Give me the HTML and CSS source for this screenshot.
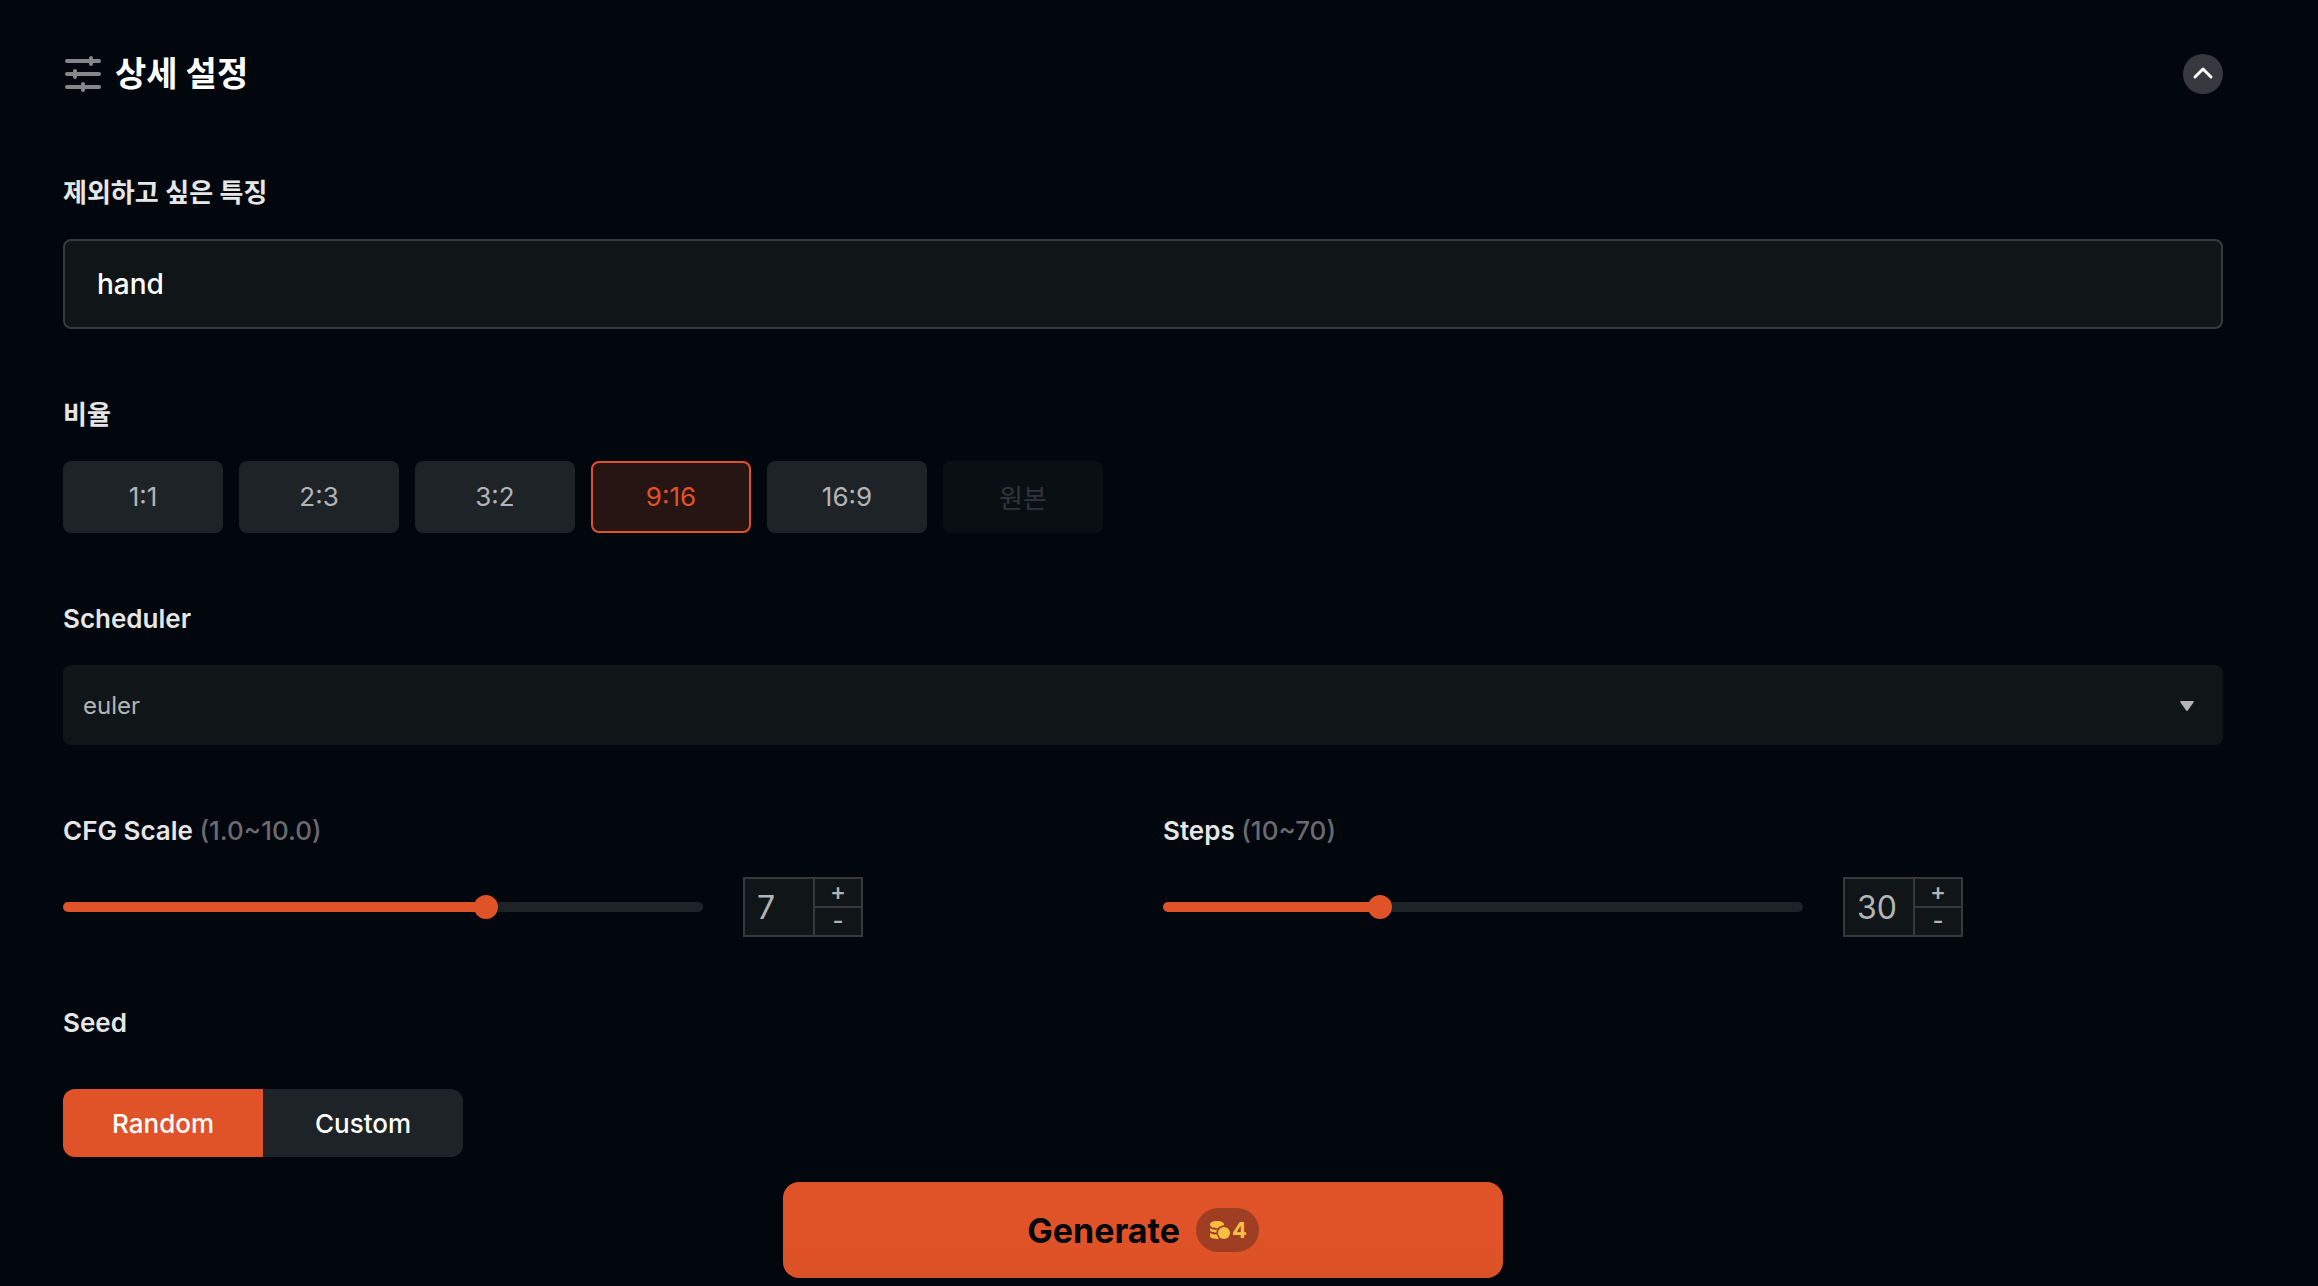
FILE: index.html
```
<!DOCTYPE html>
<html lang="ko">
<head>
    <meta charset="UTF-8">
    <meta name="viewport" content="width=device-width, initial-scale=1.0">
    <title>상세 설정</title>
    <link rel="stylesheet" href="styles.css">
</head>
<body>
    <form class="settings">
        <div class="header">
            <svg class="header-icon" viewBox="0 0 40 40" fill="none" stroke="currentColor" stroke-width="4" stroke-linecap="round">
                <path d="M4 7h32M4 20h32M4 33h32"/>
                <path d="M28 4v6M12 17v6M20 30v6"/>
            </svg>
            <h2>상세 설정</h2>
            <button type="button" class="toggle" aria-label="접기">
                <svg viewBox="0 0 40 40" fill="none" stroke="currentColor" stroke-width="3" stroke-linecap="round" stroke-linejoin="round">
                    <path d="M12 23l8-8 8 8"/>
                </svg>
            </button>
        </div>

        <div class="field">
            <label class="label" for="negative">제외하고 싶은 특징</label>
            <input id="negative" class="text-input" type="text" value="hand">
        </div>

        <div class="field">
            <span class="label" id="ratioLabel">비율</span>
            <div class="ratios" role="group" aria-labelledby="ratioLabel">
                <button type="button" class="ratio">1:1</button>
                <button type="button" class="ratio">2:3</button>
                <button type="button" class="ratio">3:2</button>
                <button type="button" class="ratio active">9:16</button>
                <button type="button" class="ratio">16:9</button>
                <button type="button" class="ratio" disabled>원본</button>
            </div>
        </div>

        <div class="field">
            <label class="label" for="scheduler">Scheduler</label>
            <div class="select-box">
                <select id="scheduler">
                    <option>euler</option>
                </select>
                <svg class="arrow" viewBox="0 0 14 10" fill="currentColor">
                    <path d="M1 0h12q1.400 0 .6 1.200L8 9.300q-1 1.200-2 0L.4 1.200Q-.4 0 1 0z"/>
                </svg>
            </div>
        </div>

        <div class="columns">
            <div class="field">
                <label class="label" for="cfg">CFG Scale <span class="hint">(1.0~10.0)</span></label>
                <div class="slider-row">
                    <input id="cfg" class="slider" type="range" min="1" max="10" value="7" style="--fill: 66.7%">
                    <div class="stepper">
                        <input type="number" value="7" aria-label="CFG Scale">
                        <div class="stepper-buttons">
                            <button type="button">+</button>
                            <button type="button">-</button>
                        </div>
                    </div>
                </div>
            </div>
            <div class="field">
                <label class="label" for="steps">Steps <span class="hint">(10~70)</span></label>
                <div class="slider-row">
                    <input id="steps" class="slider" type="range" min="10" max="70" value="30" style="--fill: 33.3%">
                    <div class="stepper">
                        <input type="number" value="30" aria-label="Steps">
                        <div class="stepper-buttons">
                            <button type="button">+</button>
                            <button type="button">-</button>
                        </div>
                    </div>
                </div>
            </div>
        </div>

        <div class="field field-seed">
            <span class="label" id="seedLabel">Seed</span>
            <div class="segments" role="group" aria-labelledby="seedLabel">
                <button type="button" class="segment active">Random</button>
                <button type="button" class="segment">Custom</button>
            </div>
        </div>

        <button type="submit" class="generate">
            Generate
            <span class="cost">
                <svg viewBox="0 0 20 18" fill="currentColor">
                    <path d="M0 3.600C0 1.300 3 0 7 0s7 1.300 7 3.400v.8c-2.600.1-4.800 1.300-6 3C3.500 7.300 0 6.200 0 3.600z"/>
                    <path d="M0 7.300c2 1.200 4.300 1.600 7 1.500-.4.900-.5 1.700-.5 2.800C3 11.600 0 10.600 0 8.800z"/>
                    <path d="M0 12c2 1.200 4.100 1.600 6.800 1.500.4 1.600 1.200 3 2.300 4.300C4 18.300 0 17 0 15z"/>
                    <circle cx="14" cy="12" r="6"/>
                </svg>
                4
            </span>
        </button>
    </form>
</body>
</html>
```
FILE: styles.css
```
* {
    margin: 0;
    padding: 0;
    box-sizing: border-box;
}

body {
    background: #02060d;
    color: #e6e6e6;
    font-family: Inter, "Noto Sans CJK KR", sans-serif;
    font-size: 26px;
}
button, input, select {
    font: inherit;
    color: inherit;
    border: none;
    outline: none;
}
button {
    cursor: pointer;
}

.settings {
    display: flex;
    flex-direction: column;
    gap: 66px;
    padding: 54px 95px 8px 63px;
}

.header {
    display: flex;
    align-items: center;
    height: 40px;
    margin-bottom: 13px;
}
.header-icon {
    width: 40px;
    height: 40px;
    margin-right: 12px;
    color: #85878a;
}
.header h2 {
    color: #fff;
    font-size: 34px;
    font-weight: 700;
    line-height: 40px;
}
.toggle {
    width: 40px;
    height: 40px;
    margin-left: auto;
    border-radius: 50%;
    background: #37393e;
    color: #fff;
}
.toggle svg {
    display: block;
}

.field {
    display: flex;
    flex-direction: column;
    gap: 26px;
}
.field-seed {
    gap: 46px;
}
.label {
    font-weight: 600;
    line-height: 40px;
}
.hint {
    color: #696b6f;
    font-weight: 500;
}

.text-input {
    width: 100%;
    height: 90px;
    padding: 0 32px;
    background: #101518;
    border: 2px solid #37393e;
    border-radius: 8px;
    color: #fff;
    font-size: 28px;
    font-weight: 500;
}

.ratios {
    display: flex;
    gap: 16px;
}
.ratio {
    width: 160px;
    height: 72px;
    padding-bottom: 2px;
    border-radius: 8px;
    background: #1e2327;
    color: #b3b4b6;
}
.ratio.active {
    background: #261512;
    border: 2px solid #e05328;
    color: #e05328;
}
.ratio:disabled {
    background: #0a0f13;
    color: #313438;
}

.select-box {
    position: relative;
}
.select-box select {
    appearance: none;
    display: block;
    width: 100%;
    height: 80px;
    padding: 0 20px;
    border-radius: 8px;
    background: #101518;
    color: #b3b4b6;
    font-size: 24px;
}
.arrow {
    position: absolute;
    top: 36px;
    right: 29px;
    width: 14px;
    height: 10px;
    color: #b3b4b6;
    pointer-events: none;
}

.columns {
    display: grid;
    grid-template-columns: 1fr 1fr;
    gap: 40px;
}
.slider-row {
    display: flex;
    align-items: center;
    gap: 40px;
}
.slider {
    appearance: none;
    flex: 0 1 640px;
    min-width: 0;
    height: 10px;
    border-radius: 5px;
    background: linear-gradient(to right, #e05328 var(--fill), #1e2327 var(--fill));
}
.slider::-webkit-slider-thumb {
    appearance: none;
    width: 24px;
    height: 24px;
    border-radius: 50%;
    background: #e05328;
}
.stepper {
    display: flex;
    width: 120px;
    height: 60px;
    border: 2px solid #37393e;
    background: #101518;
    color: #b3b4b6;
}
.stepper input {
    appearance: textfield;
    flex: 1;
    min-width: 0;
    padding-left: 12px;
    background: transparent;
    font-size: 32px;
}
.stepper input::-webkit-inner-spin-button {
    appearance: none;
}
.stepper-buttons {
    display: flex;
    flex-direction: column;
    width: 48px;
    border-left: 2px solid #37393e;
}
.stepper-buttons button {
    flex: 1;
    padding-bottom: 2px;
    background: transparent;
    font-size: 24px;
    font-weight: 500;
    line-height: 24px;
}
.stepper-buttons button + button {
    border-top: 2px solid #37393e;
}

.segments {
    display: flex;
    align-self: flex-start;
    border-radius: 12px;
    overflow: hidden;
}
.segment {
    width: 200px;
    height: 68px;
    background: #1e2327;
    color: #fff;
    font-weight: 500;
}
.segment.active {
    background: #e05328;
}

.generate {
    display: flex;
    justify-content: center;
    align-items: center;
    align-self: center;
    gap: 16px;
    width: 720px;
    max-width: 100%;
    height: 96px;
    margin-top: -41px;
    border-radius: 16px;
    background: linear-gradient(#e05328 60%, #db5126);
    color: #02060d;
    font-size: 34px;
    font-weight: 700;
}
.cost {
    display: flex;
    align-items: center;
    gap: 2px;
    height: 44px;
    padding: 0 12px 0 14px;
    border-radius: 22px;
    background: #a03e24;
    color: #f6c042;
    font-size: 22px;
}
.cost svg {
    width: 20px;
    height: 18px;
}
```
